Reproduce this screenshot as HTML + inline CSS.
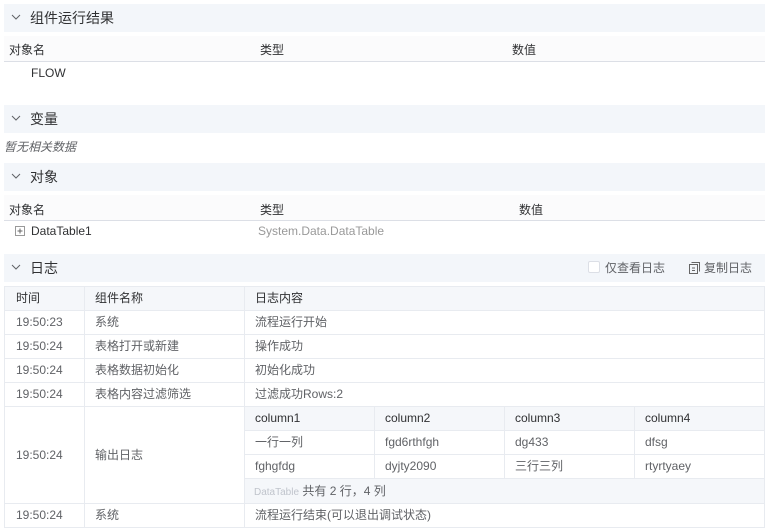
<!DOCTYPE html>
<html><head><meta charset="utf-8"><style>
*{margin:0;padding:0;box-sizing:border-box}
body{width:770px;height:531px;background:#fff;font-family:"Liberation Sans","Noto Sans CJK SC",sans-serif;font-size:12px;color:#606266;position:relative;overflow:hidden}
.a{position:absolute;white-space:nowrap}
.hd{position:absolute;left:4px;width:761px;height:28px;background:#f3f6fa;font-size:14px;color:#303133;line-height:28px;padding-left:26px}
.hd svg{position:absolute;left:7px;top:10px}
.th{position:absolute;left:4px;width:761px;height:26px;border-bottom:1px solid #dcdfe6;background:#fbfbfc;color:#303133}
.l{position:absolute;background:#e8ebf0}
.cell{position:absolute;line-height:24px;white-space:nowrap}
</style></head><body>
<div class="hd" style="top:4px"><svg width="10" height="6" viewBox="0 0 10 6"><path d="M1 1L5 5L9 1" stroke="#606266" fill="none"/></svg>组件运行结果</div>
<div class="th" style="top:36px"><span class="a" style="left:5px;top:5px">对象名</span><span class="a" style="left:256px;top:5px">类型</span><span class="a" style="left:508px;top:5px">数值</span></div>
<div class="a" style="left:31px;top:66px;color:#303133">FLOW</div>

<div class="hd" style="top:105px"><svg width="10" height="6" viewBox="0 0 10 6"><path d="M1 1L5 5L9 1" stroke="#606266" fill="none"/></svg>变量</div>
<div class="a" style="left:4px;top:138px;font-style:italic">暂无相关数据</div>

<div class="hd" style="top:163px"><svg width="10" height="6" viewBox="0 0 10 6"><path d="M1 1L5 5L9 1" stroke="#606266" fill="none"/></svg>对象</div>
<div class="th" style="top:195px"><span class="a" style="left:5px;top:6px">对象名</span><span class="a" style="left:256px;top:6px">类型</span><span class="a" style="left:515px;top:6px">数值</span></div>
<svg class="a" style="left:15px;top:226px" width="10" height="10" viewBox="0 0 10 10"><rect x="0.5" y="0.5" width="9" height="9" fill="none" stroke="#999"/><path d="M2.5 5H7.5M5 2.5V7.5" stroke="#666"/></svg>
<div class="a" style="left:31px;top:224px;color:#303133">DataTable1</div>
<div class="a" style="left:258px;top:224px;color:#999">System.Data.DataTable</div>

<div class="hd" style="top:254px"><svg width="10" height="6" viewBox="0 0 10 6"><path d="M1 1L5 5L9 1" stroke="#606266" fill="none"/></svg>日志
<span class="a" style="left:584px;top:7px;width:12px;height:12px;border:1px solid #dcdfe6;border-radius:2px;background:#fff"></span>
<span class="a" style="left:601px;font-size:12px;color:#606266">仅查看日志</span>
<svg class="a" style="left:685px;top:8px" width="11" height="12" viewBox="0 0 11 12"><rect x="0.5" y="2.5" width="8" height="9" fill="none" stroke="#666"/><path d="M2.5 0.5H10.5V9.5M3 6H6M3 8.5H6" stroke="#666" fill="none"/></svg>
<span class="a" style="left:700px;font-size:12px;color:#606266">复制日志</span></div>

<!-- log table -->
<div class="a" style="left:4px;top:286px;width:761px;height:24px;background:#f5f7fa"></div>
<div class="a" style="left:244px;top:406px;width:520px;height:24px;background:#f5f7fa"></div>
<div class="a" style="left:244px;top:478px;width:520px;height:25px;background:#f5f7fa"></div>
<div class="l" style="left:4px;top:286px;width:761px;height:1px"></div>
<div class="l" style="left:4px;top:310px;width:761px;height:1px"></div>
<div class="l" style="left:4px;top:334px;width:761px;height:1px"></div>
<div class="l" style="left:4px;top:358px;width:761px;height:1px"></div>
<div class="l" style="left:4px;top:382px;width:761px;height:1px"></div>
<div class="l" style="left:4px;top:406px;width:761px;height:1px"></div>
<div class="l" style="left:244px;top:430px;width:521px;height:1px"></div>
<div class="l" style="left:244px;top:454px;width:521px;height:1px"></div>
<div class="l" style="left:244px;top:478px;width:521px;height:1px"></div>
<div class="l" style="left:4px;top:503px;width:761px;height:1px"></div>
<div class="l" style="left:4px;top:527px;width:761px;height:1px"></div>
<div class="l" style="left:4px;top:286px;width:1px;height:242px"></div>
<div class="l" style="left:84px;top:286px;width:1px;height:242px"></div>
<div class="l" style="left:244px;top:286px;width:1px;height:242px"></div>
<div class="l" style="left:764px;top:286px;width:1px;height:242px"></div>
<div class="l" style="left:374px;top:406px;width:1px;height:72px"></div>
<div class="l" style="left:504px;top:406px;width:1px;height:72px"></div>
<div class="l" style="left:634px;top:406px;width:1px;height:72px"></div>

<div class="cell" style="left:16px;top:286px;color:#303133">时间</div>
<div class="cell" style="left:95px;top:286px;color:#303133">组件名称</div>
<div class="cell" style="left:255px;top:286px;color:#303133">日志内容</div>

<div class="cell" style="left:16px;top:310px">19:50:23</div><div class="cell" style="left:95px;top:310px">系统</div><div class="cell" style="left:255px;top:310px">流程运行开始</div>
<div class="cell" style="left:16px;top:334px">19:50:24</div><div class="cell" style="left:95px;top:334px">表格打开或新建</div><div class="cell" style="left:255px;top:334px">操作成功</div>
<div class="cell" style="left:16px;top:358px">19:50:24</div><div class="cell" style="left:95px;top:358px">表格数据初始化</div><div class="cell" style="left:255px;top:358px">初始化成功</div>
<div class="cell" style="left:16px;top:382px">19:50:24</div><div class="cell" style="left:95px;top:382px">表格内容过滤筛选</div><div class="cell" style="left:255px;top:382px">过滤成功Rows:2</div>
<div class="cell" style="left:16px;top:443px">19:50:24</div><div class="cell" style="left:95px;top:443px">输出日志</div>
<div class="cell" style="left:255px;top:406px;color:#303133">column1</div><div class="cell" style="left:385px;top:406px;color:#303133">column2</div><div class="cell" style="left:515px;top:406px;color:#303133">column3</div><div class="cell" style="left:645px;top:406px;color:#303133">column4</div>
<div class="cell" style="left:255px;top:430px">一行一列</div><div class="cell" style="left:385px;top:430px">fgd6rthfgh</div><div class="cell" style="left:515px;top:430px">dg433</div><div class="cell" style="left:645px;top:430px">dfsg</div>
<div class="cell" style="left:255px;top:454px">fghgfdg</div><div class="cell" style="left:385px;top:454px">dyjty2090</div><div class="cell" style="left:515px;top:454px">三行三列</div><div class="cell" style="left:645px;top:454px">rtyrtyaey</div>
<div class="cell" style="left:254px;top:479px"><span style="font-size:10px;color:#c0c4cc">DataTable</span> 共有 2 行，4 列</div>
<div class="cell" style="left:16px;top:503px">19:50:24</div><div class="cell" style="left:95px;top:503px">系统</div><div class="cell" style="left:255px;top:503px">流程运行结束(可以退出调试状态)</div>
</body></html>
